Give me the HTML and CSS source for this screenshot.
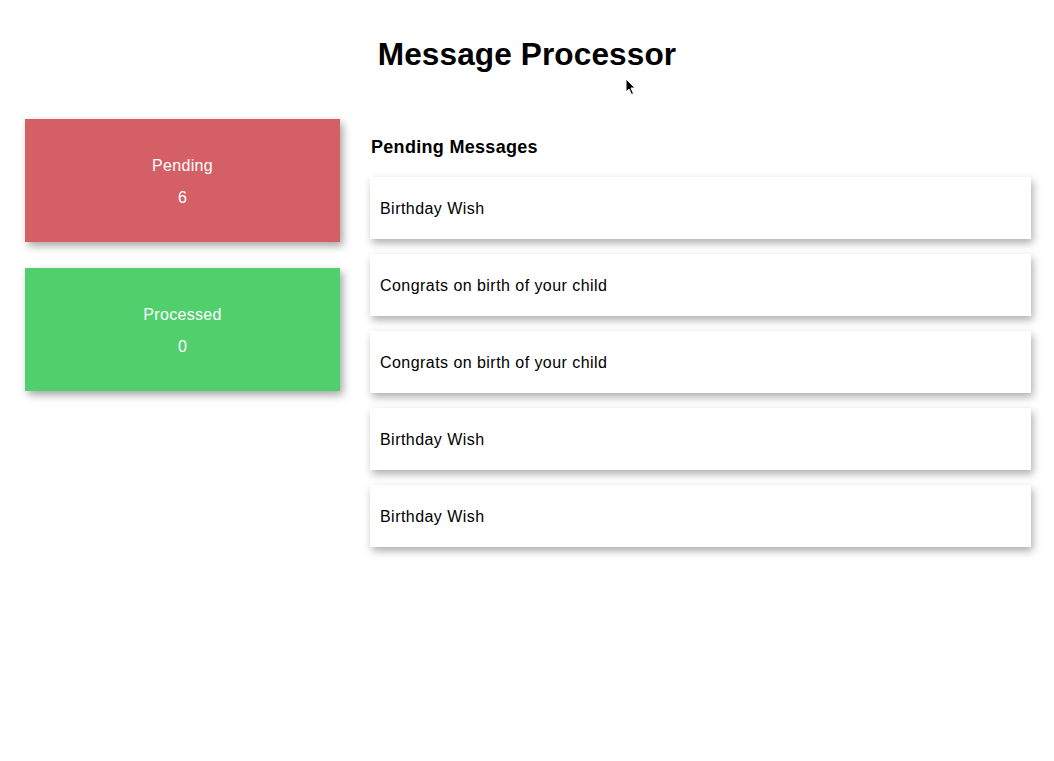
FILE: index.html
```html
<!DOCTYPE html>
<html>
<head>
<meta charset="utf-8">
<link rel="stylesheet" href="styles.css">
</head>
<body>
<h1 class="title">Message Processor</h1>
<div class="layout">
  <div class="stats">
    <div class="stat stat-pending">
      <div class="stat-label">Pending</div>
      <div class="stat-value">6</div>
    </div>
    <div class="stat stat-processed">
      <div class="stat-label">Processed</div>
      <div class="stat-value">0</div>
    </div>
  </div>
  <div class="messages">
    <h2 class="messages-title">Pending Messages</h2>
    <div class="message">Birthday Wish</div>
    <div class="message">Congrats on birth of your child</div>
    <div class="message">Congrats on birth of your child</div>
    <div class="message">Birthday Wish</div>
    <div class="message">Birthday Wish</div>
  </div>
</div>
<svg class="cursor" width="12" height="18" viewBox="0 0 12 18"><path d="M1 1 L1 14 L4 11 L6.5 16.5 L8.5 15.5 L6 10 L10 10 Z" fill="#000" stroke="#fff" stroke-width="1"/></svg>
</body>
</html>
```

FILE: styles.css
```css
html, body {
  margin: 0;
  padding: 0;
  background: #fff;
  font-family: "Liberation Sans", Arial, sans-serif;
  color: #000;
}
body {
  position: relative;
  width: 1054px;
  height: 761px;
  overflow: hidden;
}
.title {
  margin: 0;
  padding-top: 36px;
  text-align: center;
  font-size: 31.6px;
  font-weight: bold;
  line-height: 37px;
  letter-spacing: 0.1px;
}
.layout {
  display: flex;
  gap: 30px;
  padding: 46px 23px 0 25px;
}
.stats {
  width: 315px;
  display: flex;
  flex-direction: column;
  gap: 26px;
  flex: none;
}
.stat {
  height: 123px;
  box-sizing: border-box;
  padding-top: 2px;
  display: flex;
  flex-direction: column;
  align-items: center;
  justify-content: center;
  color: #fff;
  font-size: 16px;
  letter-spacing: 0.3px;
  box-shadow: 3px 4px 8px rgba(0, 0, 0, 0.35);
}
.stat-label {
  line-height: 20px;
}
.stat-value {
  margin-top: 12px;
  line-height: 20px;
}
.stat-pending {
  background: #d45f64;
}
.stat-processed {
  background: #50d06c;
}
.messages {
  flex: 1;
  display: flex;
  flex-direction: column;
  gap: 15px;
}
.messages-title {
  margin: 15px 0 2px 1px;
  font-size: 18px;
  font-weight: bold;
  line-height: 26px;
  letter-spacing: 0.3px;
}
.message {
  height: 62px;
  box-sizing: border-box;
  padding: 2px 0 0 10px;
  display: flex;
  align-items: center;
  font-size: 16px;
  letter-spacing: 0.45px;
  background: #fff;
  box-shadow: 2px 4px 8px rgba(0, 0, 0, 0.32);
}
.cursor {
  position: absolute;
  left: 625px;
  top: 78px;
}
```
